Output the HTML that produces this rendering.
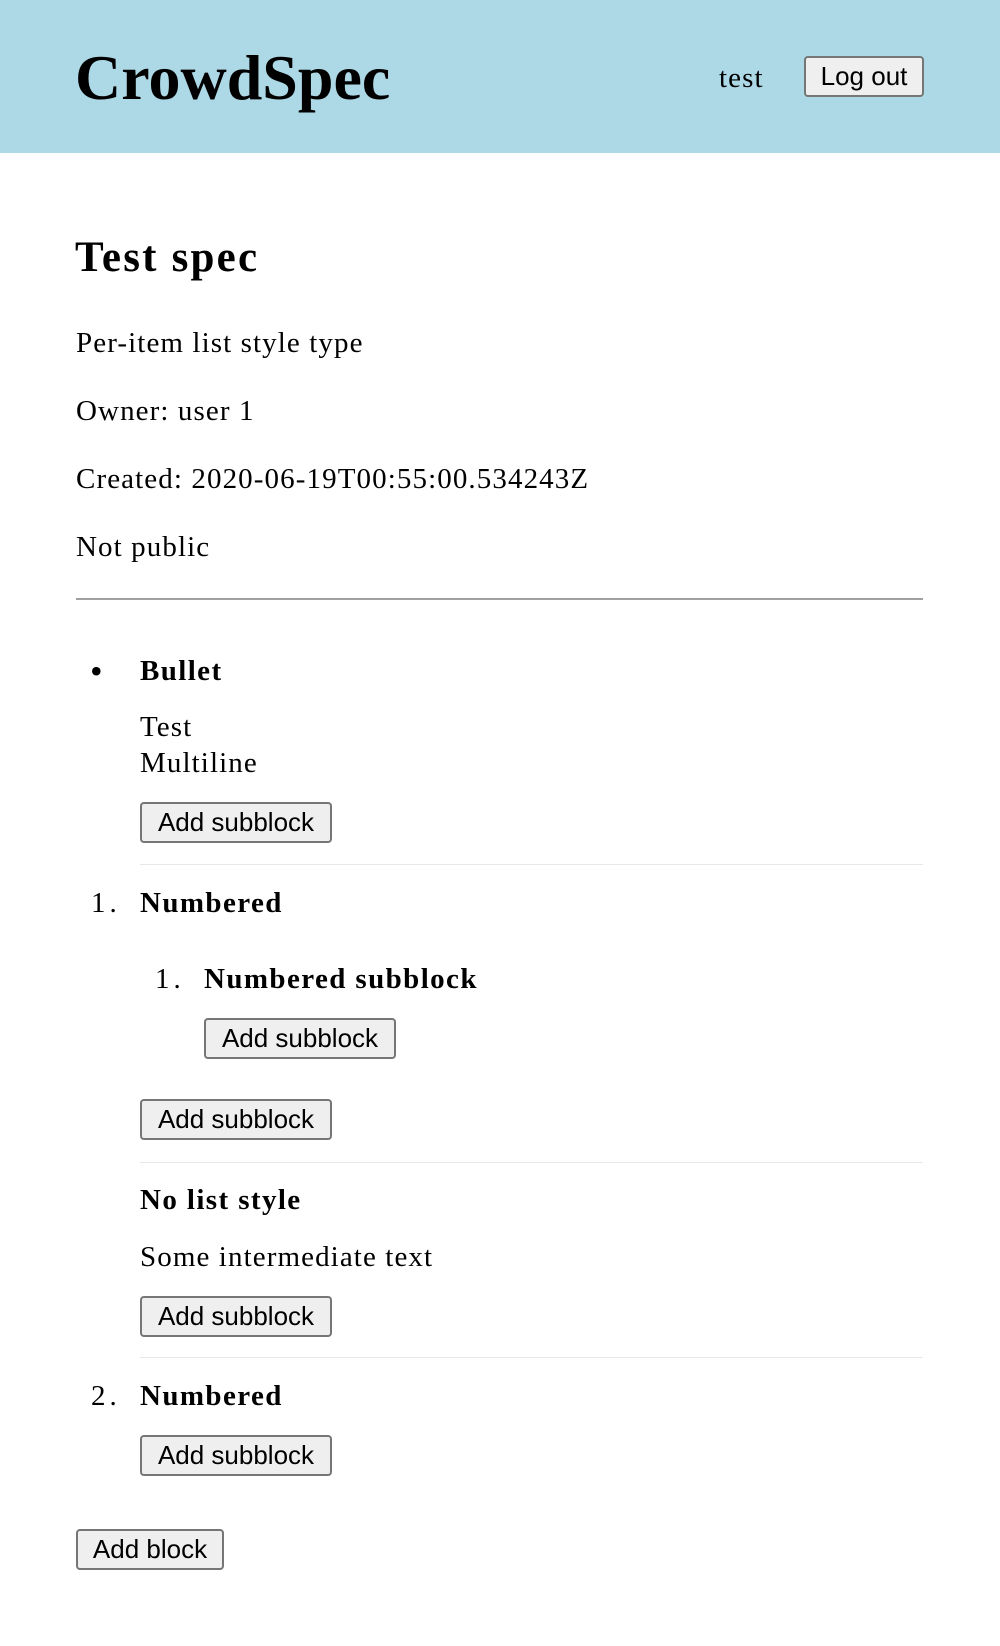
<!DOCTYPE html>
<html><head><style>
body{margin:0;width:1000px;height:1646px;position:relative;background:#fff;font-family:"Liberation Serif",serif;color:#000;overflow:hidden}
.a{position:absolute;white-space:nowrap;line-height:40px}
.t{font-size:29px;letter-spacing:1.1px}
.b{font-size:29px;font-weight:bold;letter-spacing:1.4px}
.btn{position:absolute;box-sizing:border-box;height:41px;border:2px solid #767676;border-radius:4px;background:#efefef;font-family:"Liberation Sans",sans-serif;font-size:26px;line-height:37px;text-align:center;color:#000}
.hr{position:absolute;height:1px;background:#e8e8e8}
</style></head><body>
<div style="position:absolute;left:0;top:0;width:1000px;height:153px;background:#add8e6"></div>
<div class="a" style="left:75px;top:41px;font-size:64px;font-weight:bold;line-height:74px">CrowdSpec</div>
<div class="a t" style="left:719px;top:58px">test</div>
<div class="btn" style="left:804px;top:56px;width:120px">Log out</div>
<div class="a" style="left:75px;top:236px;font-size:43px;font-weight:bold;line-height:44px;letter-spacing:2.2px">Test spec</div>
<div class="a t" style="left:76px;top:323px">Per-item list style type</div>
<div class="a t" style="left:76px;top:391px">Owner: user 1</div>
<div class="a t" style="left:76px;top:459px">Created: 2020-06-19T00:55:00.534243Z</div>
<div class="a t" style="left:76px;top:527px">Not public</div>
<div style="position:absolute;left:76px;top:598px;width:847px;height:2px;background:#a0a0a0"></div>
<div class="a" style="left:90px;top:651px;font-size:36px">•</div>
<div class="a b" style="left:140px;top:651px">Bullet</div>
<div class="a t" style="left:140px;top:707px">Test</div>
<div class="a t" style="left:140px;top:743px">Multiline</div>
<div class="btn" style="left:140px;top:802px;width:192px">Add subblock</div>
<div class="hr" style="left:140px;top:864px;width:783px"></div>
<div class="a t" style="left:91px;top:883px;letter-spacing:4px">1.</div>
<div class="a b" style="left:140px;top:883px">Numbered</div>
<div class="a t" style="left:155px;top:959px;letter-spacing:4px">1.</div>
<div class="a b" style="left:204px;top:959px">Numbered subblock</div>
<div class="btn" style="left:204px;top:1018px;width:192px">Add subblock</div>
<div class="btn" style="left:140px;top:1099px;width:192px">Add subblock</div>
<div class="hr" style="left:140px;top:1162px;width:783px"></div>
<div class="a b" style="left:140px;top:1180px">No list style</div>
<div class="a t" style="left:140px;top:1237px">Some intermediate text</div>
<div class="btn" style="left:140px;top:1296px;width:192px">Add subblock</div>
<div class="hr" style="left:140px;top:1357px;width:783px"></div>
<div class="a t" style="left:91px;top:1376px;letter-spacing:4px">2.</div>
<div class="a b" style="left:140px;top:1376px">Numbered</div>
<div class="btn" style="left:140px;top:1435px;width:192px">Add subblock</div>
<div class="btn" style="left:76px;top:1529px;width:148px">Add block</div>
</body></html>
